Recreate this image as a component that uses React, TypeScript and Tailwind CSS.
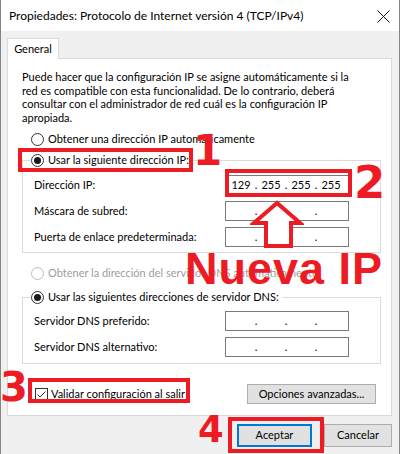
import { ReactNode } from "react";

const RED = "border-[#ed1c24]";

function Radio({ checked = false, disabled = false }: { checked?: boolean; disabled?: boolean }) {
    return (
        <span
            className={`flex-none w-[13px] h-[13px] rounded-full border bg-white flex items-center justify-center ${
                disabled ? "border-[#bcbcbc]" : "border-[#333]"
            }`}
        >
            {checked && <span className="w-[7px] h-[7px] rounded-full bg-[#1b1b1b]" />}
        </span>
    );
}

function IpBox({ value }: { value?: string[] }) {
    const parts = value ?? ["", "", "", ""];
    return (
        <div className="w-[124px] h-[20px] border border-[#7a7a7a] bg-white flex items-center pl-[1px]">
            {parts.map((p, i) => (
                <div key={i} className="flex items-center">
                    <span className="w-[28px] text-center">{p}</span>
                    {i < 3 && <span className="w-[2px] flex justify-center">.</span>}
                </div>
            ))}
        </div>
    );
}

function Row({ label, children }: { label: string; children: ReactNode }) {
    return (
        <div className="h-[20px] flex items-center justify-between">
            <span>{label}</span>
            {children}
        </div>
    );
}

function GroupBox({ header, children }: { header: ReactNode; children: ReactNode }) {
    return (
        <div className="border border-[#dcdcdc]">
            <div className="-mt-[8px] ml-[8px] h-[15px] w-fit bg-white pr-[3px] flex items-center gap-[4px]">
                {header}
            </div>
            <div className="pl-[11px] pr-[31px] flex flex-col gap-[6px]">{children}</div>
        </div>
    );
}

export default function App() {
    return (
        <div className="relative w-[400px] h-[454px] overflow-hidden bg-[#f0f0f0] border-x border-[#858585] text-[11px] text-black font-['Lato',sans-serif]">
            {/* Title bar */}
            <div className="h-[31px] bg-white flex items-center justify-between pl-[8px] pr-[9px]">
                <span className="text-[12px]">Propiedades: Protocolo de Internet versión 4 (TCP/IPv4)</span>
                <svg width="13" height="13" viewBox="0 0 13 13" className="mt-[1px]">
                    <path d="M0.5 0.5 L12.5 12.5 M12.5 0.5 L0.5 12.5" stroke="#111" strokeWidth="1" />
                </svg>
            </div>

            <div className="pt-[7px] pl-[6px] pr-[7px]">
                {/* Tab */}
                <div className="relative z-10 -mb-px w-[52px] h-[21px] bg-white border border-b-0 border-[#d9d9d9] flex items-center justify-center">
                    General
                </div>

                {/* Tab panel */}
                <div className="h-[358px] bg-white border border-[#d9d9d9] pl-[14px] pr-[10px] pt-[11px]">
                    <div className="leading-[13.5px] whitespace-nowrap">
                        <div>Puede hacer que la configuración IP se asigne automáticamente si la</div>
                        <div>red es compatible con esta funcionalidad. De lo contrario, deberá</div>
                        <div>consultar con el administrador de red cuál es la configuración IP</div>
                        <div>apropiada.</div>
                    </div>

                    <div className="mt-[8px] h-[15px] pl-[9px] flex items-center gap-[4px]">
                        <Radio />
                        <span>Obtener una dirección IP automáticamente</span>
                    </div>

                    <div className="mt-[13px]">
                        <GroupBox
                            header={
                                <>
                                    <Radio checked />
                                    <span>Usar la siguiente dirección IP:</span>
                                </>
                            }
                        >
                            <div className="mt-[7px]" />
                            <div className="-mt-[6px]">
                                <Row label="Dirección IP:">
                                    <IpBox value={["129", "255", "255", "255"]} />
                                </Row>
                            </div>
                            <Row label="Máscara de subred:">
                                <IpBox />
                            </Row>
                            <Row label="Puerta de enlace predeterminada:">
                                <IpBox />
                            </Row>
                            <div className="h-[0px] -mt-[1px]" />
                        </GroupBox>
                    </div>

                    <div className="mt-[13px] h-[15px] pl-[9px] flex items-center gap-[4px] text-[#9d9d9d]">
                        <Radio disabled />
                        <span>Obtener la dirección del servidor DNS automáticamente</span>
                    </div>

                    <div className="mt-[16px]">
                        <GroupBox
                            header={
                                <>
                                    <Radio checked />
                                    <span>Usar las siguientes direcciones de servidor DNS:</span>
                                </>
                            }
                        >
                            <div className="mt-[6px]" />
                            <div className="-mt-[6px]">
                                <Row label="Servidor DNS preferido:">
                                    <IpBox />
                                </Row>
                            </div>
                            <Row label="Servidor DNS alternativo:">
                                <IpBox />
                            </Row>
                            <div className="h-[0px]" />
                        </GroupBox>
                    </div>

                    <div className="mt-[20px] h-[20px] flex items-center justify-between pl-[13px] pr-[5px]">
                        <div className="flex items-center gap-[3px]">
                            <span className="w-[13px] h-[13px] border border-[#333] bg-white flex items-center justify-center">
                                <svg width="11" height="11" viewBox="0 0 11 11">
                                    <path d="M1.5 5.5 L4 8 L9.5 2.5" fill="none" stroke="#333" strokeWidth="1" />
                                </svg>
                            </span>
                            <span>Validar configuración al salir</span>
                        </div>
                        <button className="w-[129px] h-[20px] bg-[#e1e1e1] border border-[#adadad]">
                            Opciones avanzadas...
                        </button>
                    </div>
                </div>

                {/* Dialog buttons */}
                <div className="mt-[8px] flex justify-end gap-[12px] pr-[0px]">
                    <button className="w-[75px] h-[23px] bg-[#e1e1e1] border-2 border-[#0078d7]">Aceptar</button>
                    <button className="w-[68px] h-[23px] bg-[#e1e1e1] border border-[#adadad]">Cancelar</button>
                </div>
            </div>

            {/* Red annotations */}
            <div className={`absolute left-[17px] top-[148px] w-[175px] h-[24px] border-4 ${RED}`} />
            <div className={`absolute left-[224px] top-[169px] w-[127px] h-[28px] border-4 ${RED}`} />
            <div className={`absolute left-[27px] top-[378px] w-[162px] h-[25px] border-4 ${RED}`} />
            <div className={`absolute left-[227px] top-[417px] w-[96px] h-[36px] border-4 ${RED}`} />

            <svg className="absolute left-[249px] top-[200px]" width="54" height="50" viewBox="0 0 54 50">
                <path
                    d="M27 3 L4 23 L16 23 L16 46 L41 46 L41 23 L50 23 Z"
                    fill="white"
                    stroke="#ed1c24"
                    strokeWidth="4"
                    strokeLinejoin="miter"
                />
            </svg>

            <span className="absolute left-[192px] top-[130px] text-[42px] leading-none font-bold text-[#ed1c24] font-['DejaVu_Sans',sans-serif]">1</span>
            <span className="absolute left-[353px] top-[160px] text-[45px] leading-none font-bold text-[#ed1c24] font-['DejaVu_Sans',sans-serif]">2</span>
            <span className="absolute -left-[1px] top-[367px] text-[40px] leading-none font-bold text-[#ed1c24] font-['DejaVu_Sans',sans-serif]">3</span>
            <span className="absolute left-[197px] top-[411px] text-[37px] leading-none font-bold text-[#ed1c24] font-['DejaVu_Sans',sans-serif]">4</span>
            <span className="absolute left-[184px] top-[246px] text-[45px] leading-none font-bold tracking-[1px] text-[#ed1c24] font-['Liberation_Sans',sans-serif]">Nueva IP</span>
        </div>
    );
}
